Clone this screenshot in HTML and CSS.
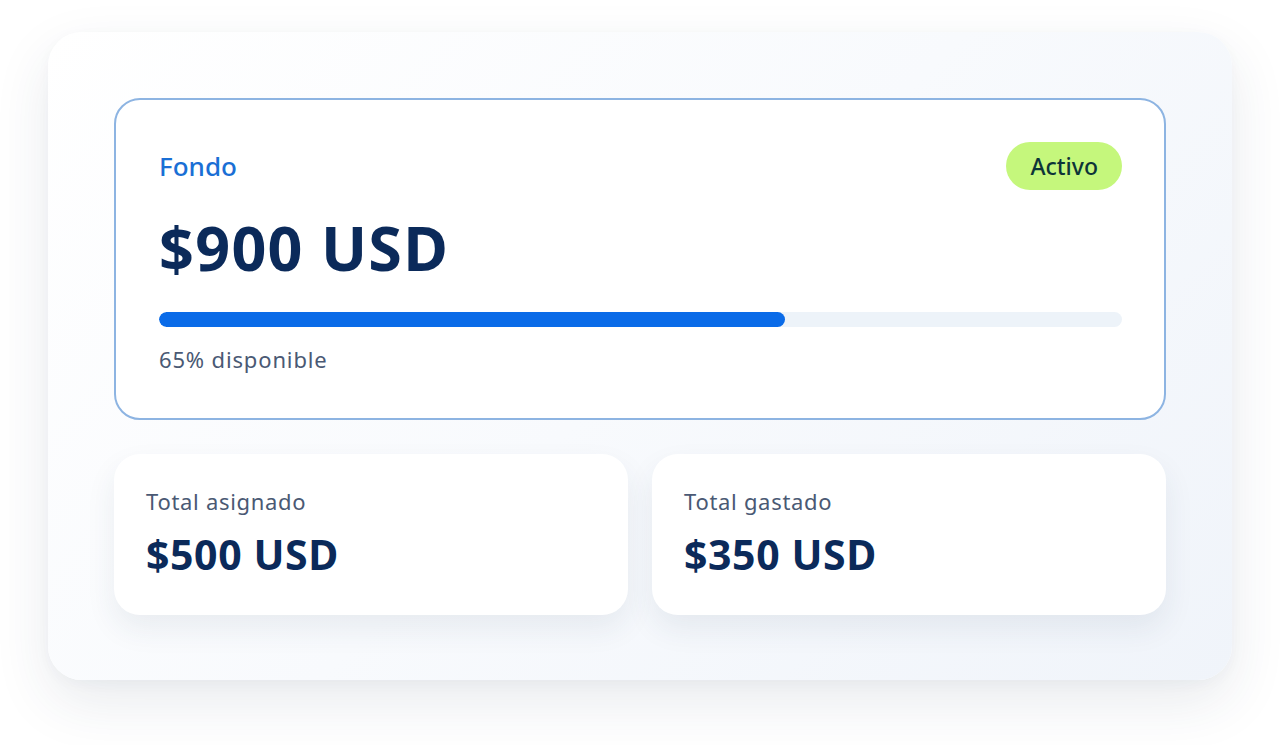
FILE: index.html
```html
<!DOCTYPE html>
<html lang="es">
<head>
<meta charset="utf-8">
<title>Fondo</title>
<link rel="stylesheet" href="styles.css">
</head>
<body>
<div class="panel">
  <section class="fund">
    <div class="fund-head">
      <span class="fund-label">Fondo</span>
      <span class="badge">Activo</span>
    </div>
    <div class="fund-amount">$900 USD</div>
    <div class="track"><div class="fill" style="width:65%"></div></div>
    <div class="fund-note">65% disponible</div>
  </section>
  <div class="stats">
    <div class="stat">
      <div class="stat-label">Total asignado</div>
      <div class="stat-value">$500 USD</div>
    </div>
    <div class="stat">
      <div class="stat-label">Total gastado</div>
      <div class="stat-value">$350 USD</div>
    </div>
  </div>
</div>
</body>
</html>
```

FILE: styles.css
```css
* { box-sizing: border-box; }
html, body { margin: 0; padding: 0; }
body {
  background: #ffffff;
  width: 1280px;
  height: 745px;
  overflow: hidden;
  font-family: "Noto Sans", "Open Sans", sans-serif;
  padding: 32px 48px 0 48px;
}
.panel {
  width: 1184px;
  height: 648px;
  border-radius: 34px;
  background: linear-gradient(135deg, #ffffff 0%, #f8fafd 50%, #f0f4fa 100%);
  box-shadow: 0 22px 56px rgba(40, 60, 90, 0.10), 0 4px 14px rgba(40, 60, 90, 0.03);
  padding: 66px 66px 0 66px;
  display: flex;
  flex-direction: column;
  gap: 34px;
}
.fund {
  height: 322px;
  border: 2px solid #8db4e2;
  border-radius: 26px;
  background: #ffffff;
  padding: 42px 42px 0 43px;
  display: flex;
  flex-direction: column;
}
.fund-head {
  display: flex;
  justify-content: space-between;
  align-items: center;
  height: 48px;
}
.fund-label {
  font-size: 26px;
  font-weight: 500;
  color: #1a6fd5;
}
.badge {
  height: 48px;
  padding: 0 24px;
  border-radius: 24px;
  background: #c5f77c;
  color: #0d3438;
  font-size: 23px;
  font-weight: 500;
  display: flex;
  align-items: center;
}
.fund-amount {
  margin-top: 16px;
  font-size: 61px;
  line-height: 84px;
  font-weight: 700;
  color: #0b2a5a;
  letter-spacing: 1.3px;
}
.track {
  margin-top: 22px;
  height: 15px;
  border-radius: 8px;
  background: #edf3f9;
  overflow: hidden;
}
.fill {
  height: 100%;
  background: #0a6be8;
  border-radius: 8px;
}
.fund-note {
  margin-top: 17px;
  font-size: 22px;
  line-height: 30px;
  color: #4a5974;
  letter-spacing: 0.85px;
}
.stats {
  display: flex;
  gap: 24px;
}
.stat {
  flex: 1;
  height: 161px;
  background: #ffffff;
  border-radius: 26px;
  box-shadow: 0 14px 30px rgba(40, 60, 90, 0.08);
  padding: 32px 32px 0 32px;
}
.stat-label {
  font-size: 22px;
  line-height: 30px;
  color: #4a5974;
  letter-spacing: 0.7px;
}
.stat-value {
  margin-top: 13px;
  font-size: 41px;
  line-height: 50px;
  font-weight: 700;
  color: #0b2a5a;
  letter-spacing: 0.6px;
}
```
